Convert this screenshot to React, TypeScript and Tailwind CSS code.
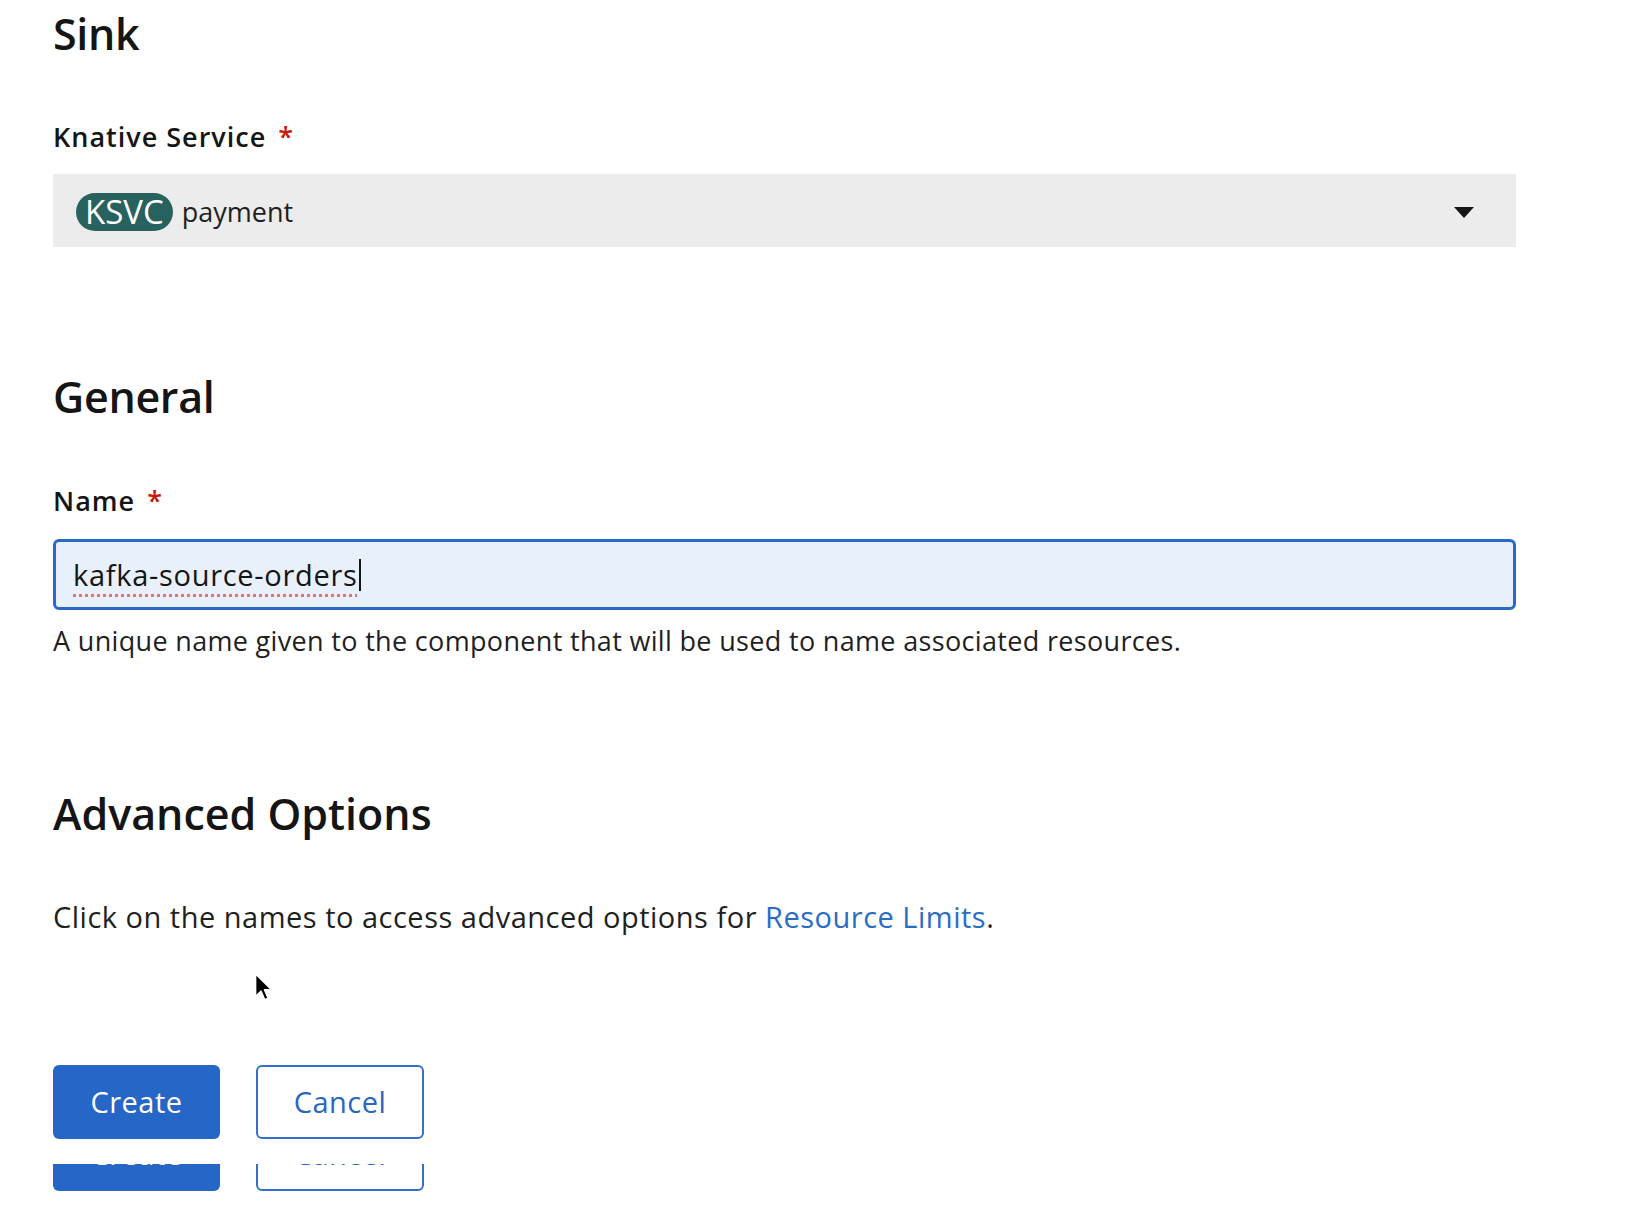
export default function App() {
  return (
    <div className="relative min-h-screen bg-white pl-[53px] font-['Open_Sans',sans-serif] text-[#151515]">
      <h2 className="pt-[6px] text-[43px] font-semibold leading-[56px] tracking-[-0.3px]">Sink</h2>

      <label className="mt-[57px] block text-[27px] font-semibold leading-[36px] tracking-[1px]">
        Knative Service <span className="ml-[4px] text-[#c9190b]">*</span>
      </label>
      <div className="mt-[19px] flex h-[73px] w-[1463px] items-center bg-[#ececec] pl-[23px] pr-[42px] pt-[3px]">
        <span className="rounded-full bg-[#28625e] px-[9px] text-[33px] leading-[38px] text-white">KSVC</span>
        <span className="ml-[9px] text-[27px] text-[#1f1f1f]">payment</span>
        <svg className="ml-auto" width="20" height="11" viewBox="0 0 20 11">
          <path d="M0 0 H20 L10 11 Z" fill="#151515" />
        </svg>
      </div>

      <h2 className="mt-[122px] text-[43px] font-semibold leading-[56px] tracking-[-0.3px]">General</h2>

      <label className="mt-[58px] block text-[27px] font-semibold leading-[36px] tracking-[1px]">
        Name <span className="ml-[4px] text-[#c9190b]">*</span>
      </label>
      <div className="mt-[20px] flex h-[71px] w-[1463px] items-center rounded-[6px] border-[3px] border-[#2a69c6] bg-[#e8f0fb] pl-[17px]">
        <span className="text-[29px] tracking-[0.7px] underline decoration-[#e57373] decoration-dotted decoration-[3px] underline-offset-[8px]">
          kafka-source-orders
        </span>
        <span className="ml-[1px] h-[32px] w-[2px] bg-[#151515]" />
      </div>
      <p className="mt-[13px] text-[27px] leading-[36px] tracking-[0.33px] text-[#1f1f1f]">
        A unique name given to the component that will be used to name associated resources.
      </p>

      <h2 className="mt-[127px] text-[43px] font-semibold leading-[56px]">Advanced Options</h2>
      <p className="mt-[57px] text-[29px] leading-[36px] tracking-[0.5px] text-[#1f1f1f]">
        Click on the names to access advanced options for{" "}
        <a className="text-[#2a6cc4]">Resource Limits</a>.
      </p>

      <div className="mt-[130px] flex gap-[36px]">
        <button className="h-[74px] w-[167px] rounded-[6px] bg-[#2566c7] text-[29px] tracking-[0.5px] text-white">Create</button>
        <button className="h-[74px] w-[168px] rounded-[6px] border-2 border-[#3570c6] bg-white text-[29px] tracking-[0.5px] text-[#2a66c0]">
          Cancel
        </button>
      </div>
      <div aria-hidden className="mt-[25px] h-[27px] overflow-hidden">
        <div className="-mt-[47px] flex gap-[36px]">
          <div className="flex h-[74px] w-[167px] items-center justify-center rounded-[6px] bg-[#2566c7] text-[29px] tracking-[0.5px] text-white">Create</div>
          <div className="flex h-[74px] w-[168px] items-center justify-center rounded-[6px] border-2 border-[#3570c6] bg-white text-[29px] tracking-[0.5px] text-[#2a66c0]">
            Cancel
          </div>
        </div>
      </div>

      <svg className="absolute left-[253px] top-[971px]" width="22" height="32" viewBox="0 0 18 26">
        <path d="M2 2 L2 21 L6.5 16.5 L9.5 23.5 L12.5 22.2 L9.6 15.4 L15.5 15.4 Z" fill="#000" stroke="#fff" strokeWidth="1.5" strokeLinejoin="round" />
      </svg>
    </div>
  )
}
